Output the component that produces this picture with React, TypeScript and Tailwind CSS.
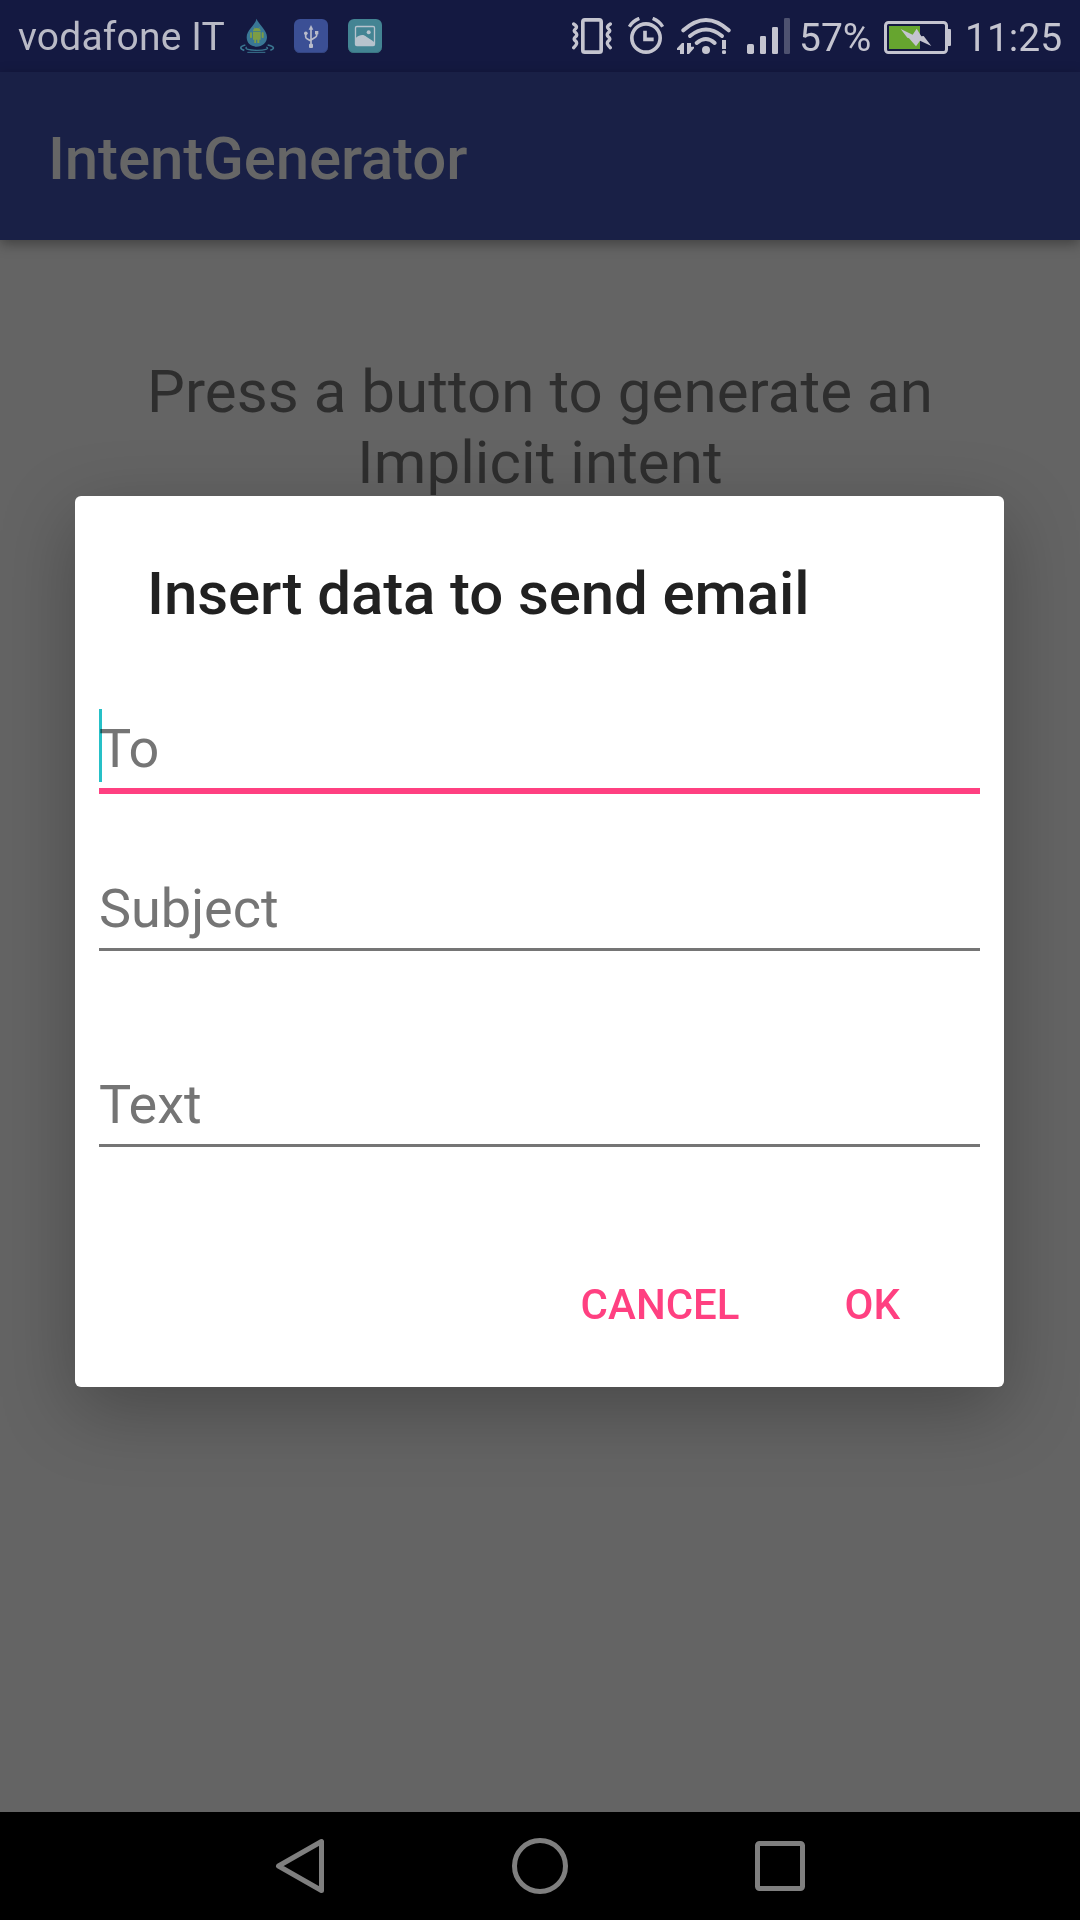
import React from "react";

const LIGHT = "#c4c4cf";

function DropIcon() {
  return (
    <svg className="ml-[15px] h-[36px] w-[36px] shrink-0" viewBox="60 54 108 108">
      <g fill="none" stroke="#3a7590" strokeWidth="4">
        <path d="M76 135C58 139 59 147 73 151M143 135C163 139 165 146 151 151" strokeWidth="5" />
        <path d="M80 141C72 147 88 151 111 151S150 147 139 141" />
        <path d="M82 157H136" strokeWidth="3" />
      </g>
      <path d="M109 56C107 75 80 88 80 112C80 130 93 140 110 140S141 128 141 111C141 90 118 75 109 56Z" fill="#397795" />
      <g fill="#7c9d45">
        <path d="M99 93C99 81 122 81 122 93Z" />
        <path d="M99 95H122V119H118V129H112V119H108V129H103V119H99Z" />
        <rect x="90" y="97" width="6" height="17" rx="2" />
        <rect x="125" y="97" width="6" height="17" rx="2" />
        <path d="M102 82L106 88M119 82L115 88" stroke="#7c9d45" strokeWidth="2" />
      </g>
    </svg>
  );
}

function UsbIcon() {
  return (
    <svg className="ml-[18px] h-[34px] w-[34px] shrink-0" viewBox="222 57 102 102">
      <rect x="222" y="57" width="102" height="102" rx="18" fill="#3b4f95" />
      <path d="M224 148Q228 158 240 158H306Q318 158 322 148" fill="none" stroke="#33447f" strokeWidth="3" />
      <g fill="none" stroke="#b9bccb" strokeWidth="5">
        <path d="M273 84V135M257 101V110Q257 114 261 116L273 123M290 98V106Q290 110 286 112L273 120" />
      </g>
      <g fill="#b9bccb">
        <path d="M273 75L280 89H266Z" />
        <rect x="267" y="131" width="12" height="13" rx="3" />
        <circle cx="257.5" cy="100" r="5.5" />
        <rect x="285" y="93" width="10" height="10" />
      </g>
    </svg>
  );
}

function PictureIcon() {
  return (
    <svg className="ml-[20px] h-[34px] w-[34px] shrink-0" viewBox="384 57 102 102">
      <rect x="384" y="57" width="102" height="102" rx="18" fill="#438493" />
      <path d="M386 148Q390 158 402 158H468Q480 158 484 148" fill="none" stroke="#3a7380" strokeWidth="3" />
      <rect x="406.5" y="79.5" width="57" height="57" rx="4" fill="none" stroke="#b7c3cd" strokeWidth="4" />
      <circle cx="446" cy="97" r="6" fill="#b7c3cd" />
      <path d="M408 113C418 104 431 102 439 110C447 116 454 118 463 127V136H408Z" fill="#b7c3cd" />
    </svg>
  );
}

function VibrateIcon() {
  return (
    <svg className="h-[38px] w-[40px] shrink-0" viewBox="36 51 120 114">
      <g fill="none" stroke={LIGHT}>
        <rect x="68.5" y="59.5" width="55" height="97" rx="6" strokeWidth="11" />
        <path
          d="M41 72C49 77 52 81 47 86C41 91 41 94 47 98C52 103 51 107 46 111C41 116 41 119 47 123C52 128 51 134 41 143"
          strokeWidth="10"
          strokeLinecap="round"
        />
        <path
          d="M151 72C143 77 140 81 145 86C151 91 151 94 145 98C140 103 141 107 146 111C151 116 151 119 145 123C140 128 141 134 151 143"
          strokeWidth="10"
          strokeLinecap="round"
        />
      </g>
    </svg>
  );
}

function AlarmIcon() {
  return (
    <svg className="ml-[16px] h-[38px] w-[36px] shrink-0" viewBox="204 51 108 114">
      <g fill="none" stroke={LIGHT} strokeWidth="11">
        <circle cx="258" cy="114" r="42.5" />
        <path d="M208 80Q218 63 238 55M308 80Q298 63 278 55" strokeWidth="10" />
        <path d="M255 92V118H281" />
      </g>
    </svg>
  );
}

function WifiIcon() {
  return (
    <svg className="ml-[13px] h-[38px] w-[54px] shrink-0" viewBox="351 51 162 114">
      <g fill="none" stroke={LIGHT} strokeWidth="12" strokeLinecap="round">
        <path d="M370 91Q438 29 506 91" />
        <path d="M390 108Q438 69 486 108" />
        <path d="M410 129Q438 105 464 129" />
      </g>
      <g fill={LIGHT}>
        <circle cx="438" cy="150" r="12" />
        <path d="M372 129V162H360V150H351V145L366 129Z" />
        <path d="M381 129H393V140H402V145L387 162H381Z" />
        <rect x="486" y="120" width="12" height="27" />
        <rect x="486" y="151" width="12" height="11" rx="4" />
      </g>
    </svg>
  );
}

function SignalIcon() {
  return (
    <svg className="ml-[16px] h-[38px] w-[43px] shrink-0" viewBox="51 51 129 114">
      <g fill={LIGHT}>
        <rect x="51" y="132" width="21" height="30" rx="5" />
        <rect x="90" y="108" width="18" height="54" rx="4" />
        <rect x="126" y="81" width="18" height="81" rx="4" />
        <rect x="162" y="54" width="18" height="108" rx="4" fill="#4e5270" />
      </g>
    </svg>
  );
}

function BatteryIcon() {
  return (
    <svg className="h-[33px] w-[67px] shrink-0" viewBox="72 63 201 99">
      <rect x="76.5" y="67.5" width="183" height="90" rx="9" fill="none" stroke={LIGHT} strokeWidth="9" />
      <path d="M262 87H270Q273 87 273 91V134Q273 138 270 138H262Z" fill={LIGHT} />
      <rect x="87" y="78" width="93" height="69" fill="#66a52f" />
      <path d="M122 87L158 104L170 86L184 109L191 108L214 138L180 122L168 139L147 115L142 113Z" fill={LIGHT} />
    </svg>
  );
}

function StatusBar() {
  return (
    <header className="flex h-[72px] items-center bg-[#141941] pl-[18px] text-[39px] leading-[72px] text-[#b9bac6]">
      <span className="w-[207px] shrink-0 whitespace-nowrap pt-px tracking-[0.18px]">vodafone IT</span>
      <DropIcon />
      <UsbIcon />
      <PictureIcon />
      <div className="ml-[190px] flex items-center">
        <VibrateIcon />
        <AlarmIcon />
        <WifiIcon />
        <SignalIcon />
        <span className="ml-[9px] w-[85px] shrink-0 whitespace-nowrap pt-[3px] text-[#c4c4cf]">57%</span>
        <div className="pt-[3px]">
          <BatteryIcon />
        </div>
        <span className="ml-[14px] whitespace-nowrap pt-[3px] text-[#c4c4cf]">11:25</span>
      </div>
    </header>
  );
}

type FieldProps = { label: string; focused?: boolean; className: string };

function Field({ label, focused, className }: FieldProps) {
  return (
    <div className={className}>
      <div
        className={
          focused
            ? "relative border-b-[6px] border-[#ff4081] pb-[7px] text-[54px] leading-[64px] text-[#757575]"
            : "border-b-[3px] border-[#757575] pb-[7px] text-[54px] leading-[64px] text-[#757575]"
        }
      >
        {focused && <span className="absolute -top-2 left-0 h-[73px] w-[3px] bg-[#26c0c7] mix-blend-multiply" />}
        {label}
      </div>
    </div>
  );
}

function EmailDialog() {
  return (
    <section className="h-[891px] w-[929px] rounded-[6px] bg-white px-[24px] pt-[62px] shadow-[0_22px_75px_rgba(0,0,0,0.28)]">
      <h2 className="pl-[48px] text-[60px] leading-[71px] font-medium tracking-[-0.11px] text-[#212121]">
        Insert data to send email
      </h2>
      <Field label="To" focused className="mt-[88px]" />
      <Field label="Subject" className="mt-[83px]" />
      <Field label="Text" className="mt-[122px]" />
      <div className="mt-[133px] flex justify-end gap-[105px] pr-[80px] text-[42px] leading-[49px] font-medium text-[#ff4081]">
        <button>CANCEL</button>
        <button>OK</button>
      </div>
    </section>
  );
}

function NavBar() {
  return (
    <nav className="flex h-[108px] items-center bg-black pl-[272px]">
      <svg className="h-[60px] w-[56px]" viewBox="0 0 56 60" fill="none" stroke="#7f7f7f" strokeWidth="5" strokeLinejoin="round">
        <path d="M49.5 5.5V54.5L6.5 30Z" />
      </svg>
      <svg className="ml-[182px] h-[60px] w-[60px]" viewBox="0 0 60 60" fill="none" stroke="#7f7f7f" strokeWidth="5">
        <circle cx="30" cy="30" r="25.5" />
      </svg>
      <svg className="ml-[180px] h-[60px] w-[60px]" viewBox="0 0 60 60" fill="none" stroke="#7f7f7f" strokeWidth="5">
        <rect x="7.5" y="7.5" width="45" height="45" rx="2" />
      </svg>
    </nav>
  );
}

export default function App() {
  return (
    <div className="relative flex h-[1920px] w-[1080px] flex-col overflow-hidden bg-[#646464] font-['Roboto',sans-serif]">
      <StatusBar />
      <div className="flex h-[168px] items-center bg-[#192046] pt-[5px] pl-[48px] shadow-[0_4px_12px_rgba(0,0,0,0.35)]">
        <h1 className="text-[60px] leading-[71px] font-medium tracking-[-0.15px] text-[#666666]">IntentGenerator</h1>
      </div>
      <main className="flex-1 px-[90px] pt-[116px]">
        <p className="text-center text-[60px] leading-[71px] tracking-[0.07px] text-[#2e2e2e]">
          Press a button to generate an
          <br />
          Implicit intent
        </p>
      </main>
      <NavBar />
      <div className="absolute inset-x-0 top-[496px] flex pl-[75px]">
        <EmailDialog />
      </div>
    </div>
  );
}
